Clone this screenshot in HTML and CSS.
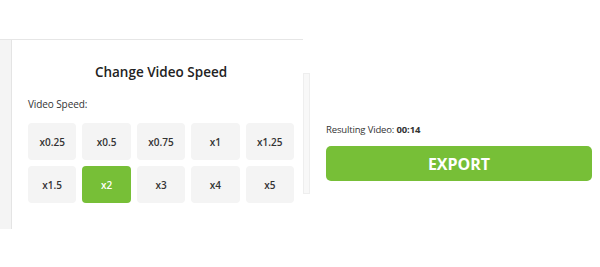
FILE: index.html
```html
<!DOCTYPE html>
<html>
<head>
    <link rel="stylesheet" href="styles.css">
</head>
<body>
    <div class="page">
        <div class="left">
            <div class="strip"></div>
            <div class="panel">
                <h2 class="title">Change Video Speed</h2>
                <div class="label">Video Speed:</div>
                <div class="speeds">
                    <button class="speed">x0.25</button>
                    <button class="speed">x0.5</button>
                    <button class="speed">x0.75</button>
                    <button class="speed">x1</button>
                    <button class="speed">x1.25</button>
                    <button class="speed">x1.5</button>
                    <button class="speed active">x2</button>
                    <button class="speed">x3</button>
                    <button class="speed">x4</button>
                    <button class="speed">x5</button>
                </div>
            </div>
        </div>
        <div class="scroll"></div>
        <div class="right">
            <div class="result">Resulting Video: <b>00:14</b></div>
            <button class="export">EXPORT</button>
        </div>
    </div>
</body>
</html>
```

FILE: styles.css
```css
body {
    margin: 0;
    background: #fff;
    font-family: "Open Sans", "Liberation Sans", sans-serif;
    color: #333;
}
.page {
    display: flex;
    align-items: flex-start;
    margin-top: 39px;
}
.left {
    display: flex;
    width: 303px;
    height: 189px;
    border-top: 1px solid #e6e6e6;
}
.strip {
    width: 11px;
    background: #f4f4f4;
    border-right: 1px solid #e4e4e4;
}
.panel {
    width: 266px;
    padding: 23px 9px 0 16px;
}
.title {
    margin: 0;
    font-size: 13.5px;
    font-weight: 600;
    line-height: 18px;
    text-align: center;
    color: #222;
}
.label {
    margin-top: 16px;
    font-size: 10px;
    line-height: 14px;
    letter-spacing: -0.1px;
}
.speeds {
    display: grid;
    grid-template-columns: repeat(5, 1fr);
    gap: 6px 6px;
    margin-top: 12px;
}
.speed {
    height: 37px;
    padding: 0;
    border: 0;
    border-radius: 4px;
    background: #f4f4f4;
    font-family: inherit;
    font-size: 10px;
    font-weight: 600;
    color: #333;
}
.speed.active {
    background: #77bf37;
    color: #fff;
}
.scroll {
    width: 5px;
    height: 119px;
    margin-top: 34px;
    background: #f8f8f8;
    border: 1px solid #eee;
}
.right {
    margin-left: 16px;
    width: 266px;
    padding-top: 83px;
}
.result {
    font-size: 9.5px;
    line-height: 15px;
    letter-spacing: -0.15px;
}
.result b {
    font-weight: 700;
}
.export {
    display: block;
    width: 100%;
    height: 35px;
    margin-top: 9px;
    border: 0;
    border-radius: 5px;
    background: #77bf37;
    color: #fff;
    font-family: inherit;
    font-size: 16px;
    font-weight: 700;
}
```
